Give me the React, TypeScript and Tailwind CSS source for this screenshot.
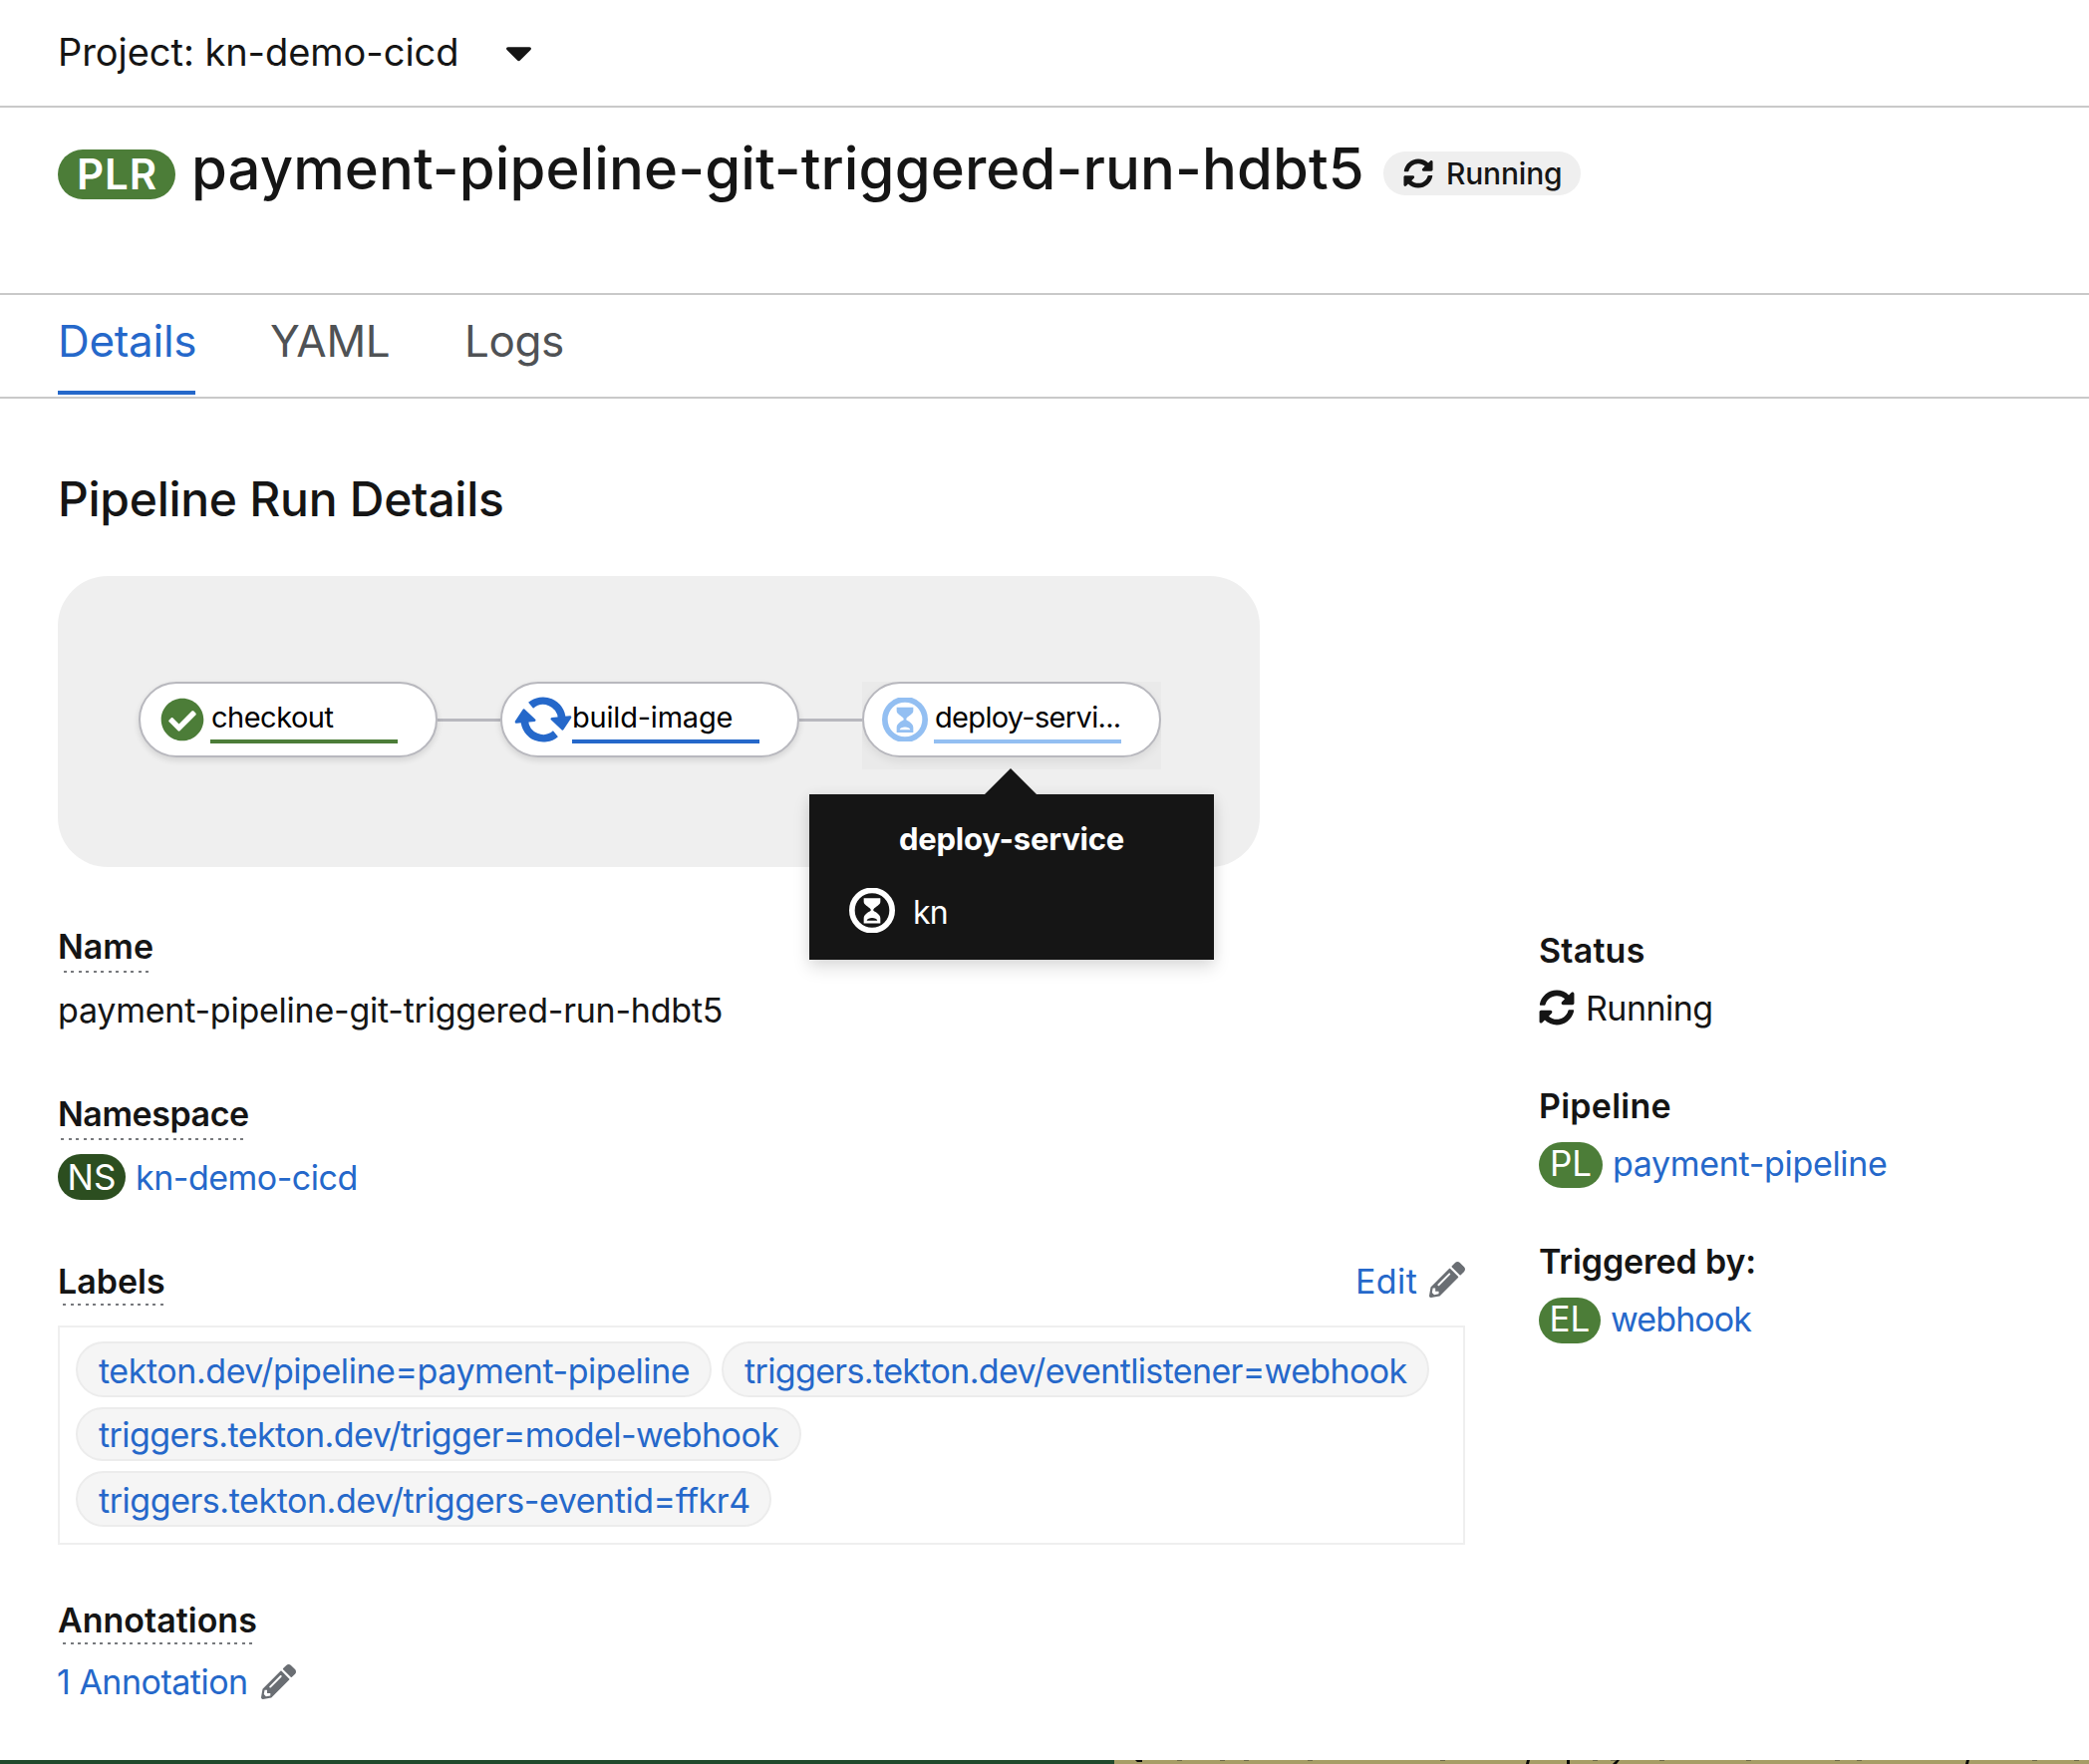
import React from 'react';
import { FaCaretDown, FaCheckCircle, FaPencilAlt, FaSyncAlt } from 'react-icons/fa';

function PendingIcon({ className }: { className: string }) {
  return (
    <svg viewBox="0 0 138 132" className={className} fill="currentColor">
      <circle cx="69" cy="66" r="60.5" fill="none" stroke="currentColor" strokeWidth="17" />
      <path
        fillRule="evenodd"
        d="M44 29H94V40C94 50 80 54 73 63V67C80 72 94 78 94 90V105H44V90C44 78 58 72 65 67V63C58 54 44 50 44 40ZM53 97H85C83 86 55 86 53 97Z"
      />
    </svg>
  );
}

function RunningIcon({ className }: { className: string }) {
  return (
    <svg viewBox="47 57 175 136" className={className} fill="currentColor" stroke="currentColor">
      <g>
        <path d="M97 82A57 57 0 0 1 191 122" fill="none" strokeWidth="23" />
        <path d="M161 123L216 118L193 153Z" strokeWidth="8" strokeLinejoin="round" />
      </g>
      <g transform="rotate(180 134.5 125)">
        <path d="M97 82A57 57 0 0 1 191 122" fill="none" strokeWidth="23" />
        <path d="M161 123L216 118L193 153Z" strokeWidth="8" strokeLinejoin="round" />
      </g>
    </svg>
  );
}

function Term({ children, className = '', dots }: { children: React.ReactNode; className?: string; dots: string }) {
  return (
    <div className={`flex flex-col justify-between items-start ${className}`}>
      <div className="text-[34px] leading-[40px] font-semibold whitespace-nowrap">{children}</div>
      <div className={`h-[2px] bg-[repeating-linear-gradient(90deg,#77797d_0_3px,transparent_3px_7.5px)] ${dots}`} />
    </div>
  );
}

function Badge({ children, className }: { children: React.ReactNode; className: string }) {
  return (
    <span className={`h-[46px] rounded-[23px] text-center text-[35px] text-white shrink-0 ${className}`}>{children}</span>
  );
}

function Node({ icon, label, tracking, bar, shadow }: { icon: React.ReactNode; label: string; tracking: string; bar: string; shadow: string }) {
  return (
    <div className={`relative flex h-[76px] w-[300px] rounded-[38px] border-2 border-[#b8b8be] bg-white ${shadow}`}>
      <div className="w-[70px] shrink-0">{icon}</div>
      <div className={`h-[60px] w-[188px] border-b-4 pt-[6px] text-[29px] leading-[56px] whitespace-nowrap text-black ${tracking} ${bar}`}>
        {label}
      </div>
    </div>
  );
}

const Connector = () => <div className="mt-[37px] h-[3px] w-[63px] bg-[#b8b8be]" />;

const labels = [
  { text: 'tekton.dev/pipeline=payment-pipeline', cls: 'w-[638px] h-[56px] leading-[55px] tracking-[-0.44px]' },
  { text: 'triggers.tekton.dev/eventlistener=webhook', cls: 'w-[710px] h-[56px] leading-[55px] tracking-[-0.64px]' },
  { text: 'triggers.tekton.dev/trigger=model-webhook', cls: 'w-[728px] h-[54px] leading-[51px] tracking-[-0.58px]' },
  { text: 'triggers.tekton.dev/triggers-eventid=ffkr4', cls: 'w-[698px] h-[56px] leading-[55px] tracking-[-0.45px]' },
];

const specks = [1183, 1226, 1250, 1314, 1447, 1600, 1618, 1667, 1754, 1843, 1865, 2041, 2083];

export default function App() {
  return (
    <div className="flex h-[1770px] w-[2096px] flex-col overflow-hidden bg-white font-['Inter',sans-serif] text-[#151515]">
      <div className="flex h-[108px] shrink-0 border-b-2 border-[#c9c9c9] pl-[58px]">
        <span className="w-[449px] text-[38px] leading-[104px] tracking-[-0.05px]">Project: kn-demo-cicd</span>
        <FaCaretDown className="mt-[31px] h-[43px] w-[27px]" />
      </div>

      <div className="flex h-[188px] shrink-0 border-b-2 border-[#c9c9c9] pl-[58px]">
        <span className="mt-[42px] h-[50px] w-[118px] rounded-[25px] bg-[#4c7d38] pl-px text-center text-[42px] leading-[50px] font-semibold tracking-[1px] text-white">
          PLR
        </span>
        <h1 className="ml-[16px] w-[1196px] text-[58px] leading-[122px] font-medium tracking-[0.12px] whitespace-nowrap">
          payment-pipeline-git-triggered-run-hdbt5
        </h1>
        <span className="mt-[44px] flex h-[44px] w-[198px] items-center rounded-[22px] bg-[#efefef] pl-[20px] text-[30px] leading-[44px] font-medium">
          <FaSyncAlt className="h-[30px] w-[30px]" />
          <span className="ml-[13px] tracking-[-0.2px]">Running</span>
        </span>
      </div>

      <div className="flex h-[104px] shrink-0 border-b-2 border-[#c9c9c9] pl-[58px] text-[44px] leading-[92px] text-[#4f5255]">
        <span className="h-[100px] w-[138px] border-b-4 border-[#2568ca] tracking-[-0.3px] text-[#2568ca]">Details</span>
        <span className="ml-[75px] w-[120px] tracking-[-0.3px]">YAML</span>
        <span className="ml-[75px] tracking-[-0.4px]">Logs</span>
      </div>

      <h2 className="mt-[71px] shrink-0 pl-[58px] text-[48px] leading-[60px] font-medium tracking-[-0.28px]">Pipeline Run Details</h2>

      <div className="relative mt-[47px] ml-[58px] flex h-[292px] w-[1206px] shrink-0 rounded-[50px] bg-[#efefef] pt-[106px] pl-[81px]">
        <Node
          icon={<FaCheckCircle className="mt-[14px] ml-[20px] h-[44px] w-[44px] text-[#4c7d38]" />}
          label="checkout"
          tracking="pl-px tracking-[-0.5px]"
          bar="border-[#4c7d38]"
          shadow="shadow-[0_3px_6px_rgba(0,0,0,0.12)]"
        />
        <Connector />
        <Node
          icon={<RunningIcon className="mt-[13px] ml-[12px] h-[46px] w-[58px] text-[#2568ca]" />}
          label="build-image"
          tracking="tracking-[-0.2px]"
          bar="border-[#2568ca]"
          shadow="shadow-[0_3px_6px_rgba(0,0,0,0.12)]"
        />
        <Connector />
        <div className="relative h-[88px] w-[300px]">
          <div className="h-[88px] overflow-hidden bg-[#eaeaea]">
            <Node
              icon={<PendingIcon className="mt-[14px] ml-[18px] h-[44px] w-[46px] text-[#93bff2]" />}
              label="deploy-servi..."
              tracking="pl-px tracking-[-0.68px]"
              bar="border-[#93bff2]"
              shadow="shadow-[0_4px_10px_rgba(0,0,0,0.07)]"
            />
          </div>
          <div className="absolute top-[87px] left-[-53px] flex w-[406px] flex-col items-center">
            <div className="mr-[2px] h-[26px] w-[52px] bg-[#151515] [clip-path:polygon(50%_0,100%_100%,0_100%)]" />
            <div className="h-[166px] w-[406px] bg-[#151515] pt-[23px] text-white shadow-[0_8px_16px_rgba(0,0,0,0.13),0_0_12px_rgba(0,0,0,0.06)]">
              <div className="text-center text-[31px] leading-[44px] font-bold tracking-[-0.2px]">deploy-service</div>
              <div className="mt-[24px] flex pl-[40px]">
                <PendingIcon className="mt-[3px] h-[45px] w-[46px]" />
                <span className="ml-[18px] text-[32px] leading-[56px] tracking-[-0.8px]">kn</span>
              </div>
            </div>
          </div>
        </div>
      </div>

      <div className="flex h-[896px] shrink-0 pl-[58px]">
        <div className="w-[1412px]">
          <Term className="mt-[60px] h-[46px]" dots="ml-[6px] w-[87px]">Name</Term>
          <div className="mt-[18px] text-[34px] leading-[40px] tracking-[-0.23px]">payment-pipeline-git-triggered-run-hdbt5</div>

          <Term className="mt-[64px] h-[46px] tracking-[-0.45px]" dots="ml-[3px] w-[184px]">Namespace</Term>
          <div className="mt-[14px] flex h-[46px] text-[34px] leading-[47px]">
            <Badge className="w-[68px] bg-[#2c4e20]">NS</Badge>
            <a className="ml-[10px] tracking-[-0.5px] text-[#2568ca]">kn-demo-cicd</a>
          </div>

          <div className="mt-[62px] flex h-[44px] justify-between">
            <Term className="h-[44px]" dots="ml-[5px] w-[102px]">Labels</Term>
            <div className="flex w-[111px] text-[34px] leading-[40px] text-[#2568ca]">
              <span className="w-[75px] pl-px tracking-[0.4px]">Edit</span>
              <FaPencilAlt className="h-[36px] w-[36px] text-[#6a6e73]" />
            </div>
          </div>
          <div className="mt-[20px] flex h-[220px] flex-wrap content-start gap-[10px] border-2 border-[#efefef] pt-[14px] pl-[16px]">
            {labels.map((l) => (
              <span
                key={l.text}
                className={`rounded-[28px] border-2 border-[#ececec] bg-[#f5f5f5] pl-[21px] text-[34px] whitespace-nowrap text-[#2568ca] ${l.cls}`}
              >
                {l.text}
              </span>
            ))}
          </div>

          <Term className="mt-[56px] h-[44px]" dots="ml-[5px] w-[194px]">Annotations</Term>
          <div className="mt-[18px] flex text-[34px] leading-[40px] tracking-[-0.5px] text-[#2568ca]">
            <span className="-ml-px w-[205px]">1 Annotation</span>
            <FaPencilAlt className="mt-[2px] h-[35px] w-[35px] text-[#6a6e73]" />
          </div>
        </div>

        <div className="ml-[74px] text-[34px] leading-[40px]">
          <div className="mt-[64px] font-semibold tracking-[0.2px]">Status</div>
          <div className="mt-[18px] flex">
            <FaSyncAlt className="mt-[1px] h-[36px] w-[36px]" />
            <span className="ml-[11px] tracking-[-0.55px]">Running</span>
          </div>
          <div className="mt-[58px] font-semibold tracking-[0.25px]">Pipeline</div>
          <div className="mt-[16px] flex h-[46px] leading-[43px]">
            <Badge className="w-[64px] bg-[#4c7d38]">PL</Badge>
            <a className="ml-[10px] tracking-[-0.33px] text-[#2568ca]">payment-pipeline</a>
          </div>
          <div className="mt-[54px] font-semibold tracking-[-0.15px]">Triggered by:</div>
          <div className="mt-[16px] flex h-[46px] leading-[43px]">
            <Badge className="w-[62px] bg-[#4c7d38]">EL</Badge>
            <a className="ml-[10px] tracking-[-0.9px] text-[#2568ca]">webhook</a>
          </div>
        </div>
      </div>

      <div className="flex h-[4px] shrink-0">
        <div className="w-[1118px] bg-[#1f4a2c]" />
        <svg viewBox="1118 0 978 4" className="h-[4px] w-[978px] bg-[#a69d66]">
          {specks.map((x) => (
            <rect key={x} x={x - 2} y="0" width="5" height="1" fill="#6f6a48" />
          ))}
          <path d="M1139 0h7v2h-5zM1532 0h3l-1 4h-3zM1572 0h3v4h-3zM1622 0h3l-3 4h-4zM1973 0h3l-1 4h-3z" fill="#0b0b08" />
        </svg>
      </div>
    </div>
  );
}
